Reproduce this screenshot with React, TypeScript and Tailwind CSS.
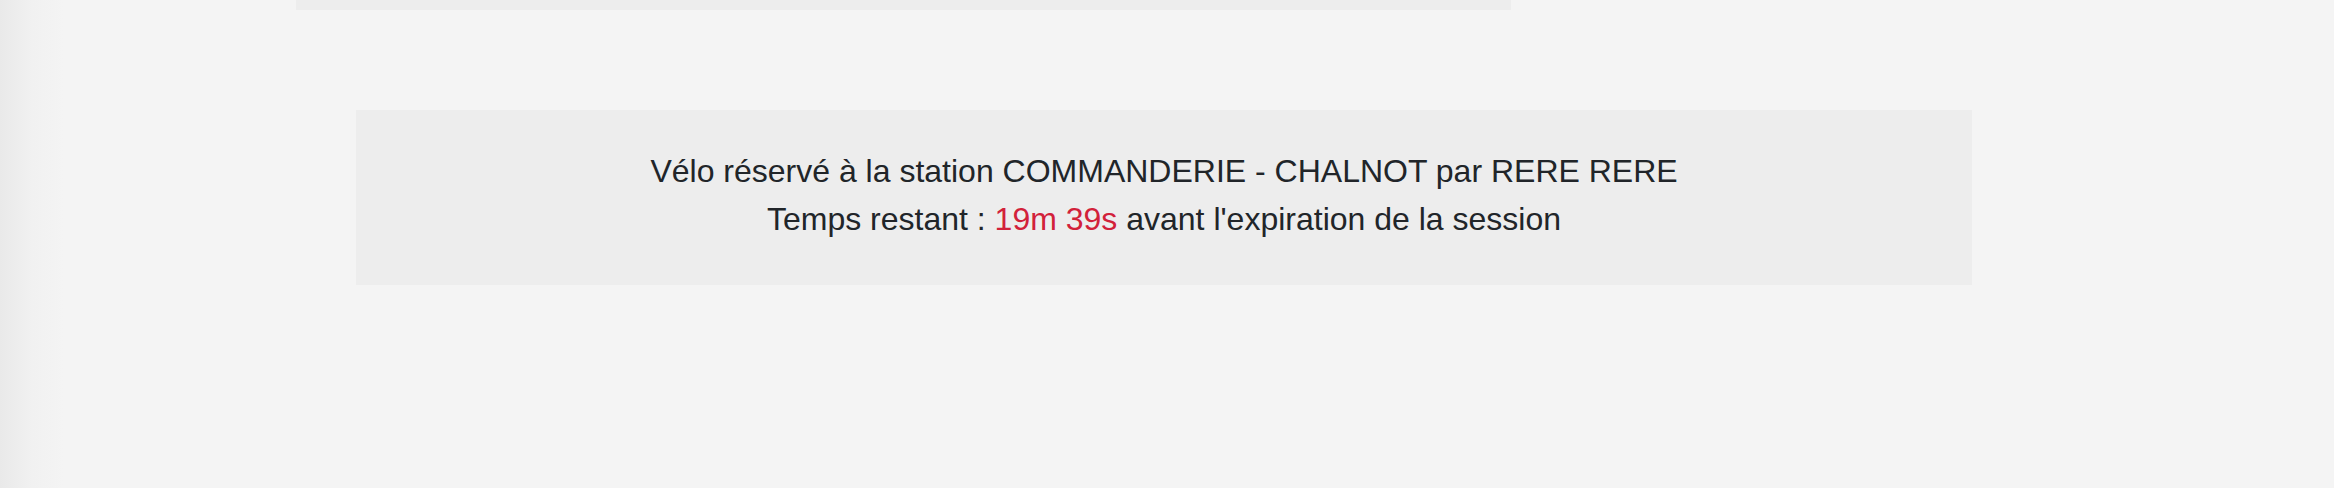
export default function App() {
  return (
    <div
      className="flex h-[488px] w-full bg-[#f4f4f4] overflow-hidden"
      style={{ fontFamily: '"Liberation Sans", Arial, sans-serif' }}
    >
      <div className="w-[64px] shrink-0 bg-gradient-to-r from-[#e9e9e9] via-[#f1f1f1] to-[#f4f4f4]" />
      <div className="flex flex-col flex-1">
        <div className="ml-[232px] w-[1215px] h-[10px] bg-[#ededed]" />
        <div className="ml-[292px] mt-[100px] w-[1616px] bg-[#ededed] pt-[37px] pb-[42px] text-center text-[32px] leading-[48px] text-[#212529]">
          <p>Vélo réservé à la station COMMANDERIE - CHALNOT par RERE RERE</p>
          <p>
            Temps restant : <span className="text-[#d2213a]">19m 39s</span> avant l'expiration de la session
          </p>
        </div>
      </div>
    </div>
  );
}
